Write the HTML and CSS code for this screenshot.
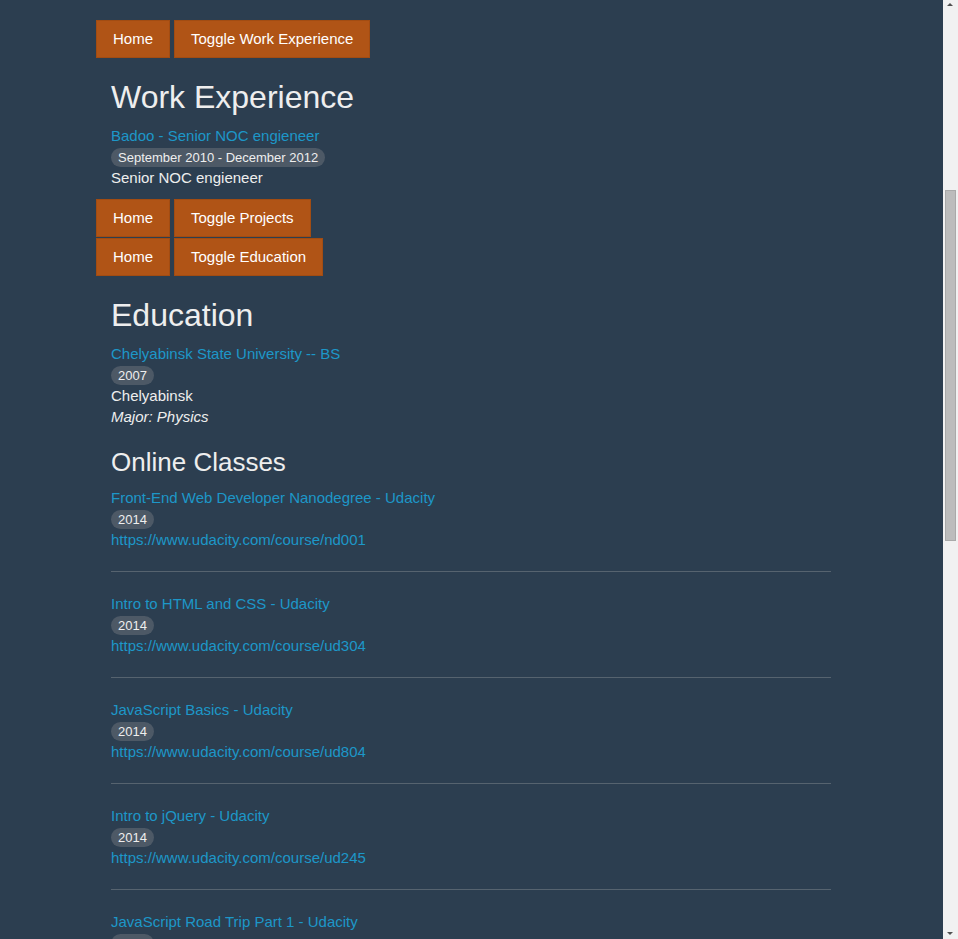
FILE: index.html
```html
<!DOCTYPE html>
<html lang="en">
<head>
<meta charset="utf-8">
<title>Resume</title>
<link rel="stylesheet" href="styles.css">
</head>
<body>
<div class="container">
  <nav class="nav">
    <a class="btn" href="#">Home</a>
    <a class="btn" href="#">Toggle Work Experience</a>
  </nav>
  <section class="section work">
    <h2 class="heading">Work Experience</h2>
    <div class="entry">
      <a class="link" href="#">Badoo - Senior NOC engieneer</a>
      <div class="line"><span class="badge">September 2010 - December 2012</span></div>
      <div class="line">Senior NOC engieneer</div>
    </div>
  </section>
  <nav class="nav">
    <a class="btn" href="#">Home</a>
    <a class="btn" href="#">Toggle Projects</a>
  </nav>
  <nav class="nav">
    <a class="btn" href="#">Home</a>
    <a class="btn" href="#">Toggle Education</a>
  </nav>
  <section class="section">
    <h2 class="heading">Education</h2>
    <div class="entry">
      <a class="link" href="#">Chelyabinsk State University -- BS</a>
      <div class="line"><span class="badge">2007</span></div>
      <div class="line">Chelyabinsk</div>
      <div class="line"><em>Major: Physics</em></div>
    </div>
    <h3 class="subheading">Online Classes</h3>
    <div class="class">
      <a class="link" href="#">Front-End Web Developer Nanodegree - Udacity</a>
      <div class="line"><span class="badge">2014</span></div>
      <a class="link" href="#">https://www.udacity.com/course/nd001</a>
    </div>
    <hr class="rule">
    <div class="class">
      <a class="link" href="#">Intro to HTML and CSS - Udacity</a>
      <div class="line"><span class="badge">2014</span></div>
      <a class="link" href="#">https://www.udacity.com/course/ud304</a>
    </div>
    <hr class="rule">
    <div class="class">
      <a class="link" href="#">JavaScript Basics - Udacity</a>
      <div class="line"><span class="badge">2014</span></div>
      <a class="link" href="#">https://www.udacity.com/course/ud804</a>
    </div>
    <hr class="rule">
    <div class="class">
      <a class="link" href="#">Intro to jQuery - Udacity</a>
      <div class="line"><span class="badge">2014</span></div>
      <a class="link" href="#">https://www.udacity.com/course/ud245</a>
    </div>
    <hr class="rule">
    <div class="class">
      <a class="link" href="#">JavaScript Road Trip Part 1 - Udacity</a>
      <div class="line"><span class="badge">2014</span></div>
      <a class="link" href="#">https://www.codeschool.com/courses/javascript-road-trip-part-1</a>
    </div>
    <hr class="rule">
    <div class="class">
      <a class="link" href="#">JavaScript Road Trip Part 2 - Code School</a>
      <div class="line"><span class="badge">2014</span></div>
      <a class="link" href="#">https://www.codeschool.com/courses/javascript-road-trip-part-2</a>
    </div>
    <hr class="rule">
    <div class="class">
      <a class="link" href="#">Object-Oriented JavaScript - Udacity</a>
      <div class="line"><span class="badge">2014</span></div>
      <a class="link" href="#">https://www.udacity.com/course/ud015</a>
    </div>
  </section>
</div>
<div class="scrollbar" aria-hidden="true">
  <span class="arrow arrow-up"></span>
  <span class="thumb"></span>
  <span class="arrow arrow-down"></span>
</div>
</body>
</html>
```

FILE: styles.css
```css
html, body {
  margin: 0;
  padding: 0;
}

html {
  overflow: hidden;
}

body {
  background: #2c3e50;
  color: #eeeeee;
  font-family: "Liberation Sans", Arial, sans-serif;
  font-size: 15px;
  line-height: 21px;
  padding: 20px 16px 40px 0;
}

.container {
  width: 750px;
  margin: 0 auto;
}

.nav {
  display: flex;
  gap: 4px;
}

.nav + .nav {
  margin-top: 1px;
}

.btn {
  display: block;
  box-sizing: border-box;
  height: 38px;
  line-height: 36px;
  padding: 0 16px;
  background: #b05416;
  border: 1px solid #a24c12;
  color: #ffffff;
  text-decoration: none;
  font-size: 15px;
}

.section {
  padding: 0 15px;
}

.work {
  padding-bottom: 11px;
}

.heading {
  font-size: 32px;
  font-weight: normal;
  line-height: 1.1;
  margin: 22px 0 10px;
  color: #eeeeee;
}

.subheading {
  font-size: 26px;
  font-weight: normal;
  line-height: 1.1;
  margin: 21px 0 10px;
  color: #eeeeee;
}

.link {
  display: block;
  color: #1d97c8;
  text-decoration: none;
}

.line {
  display: block;
  height: 21px;
}

.badge {
  display: inline-block;
  font-size: 13px;
  line-height: 13px;
  padding: 3px 7px;
  margin-top: 2px;
  border-radius: 10px;
  background: #4d5966;
  color: #eeeeee;
  vertical-align: top;
}

.rule {
  border: 0;
  border-top: 1px solid #56636f;
  margin: 21px 0;
  height: 0;
}

.scrollbar {
  position: fixed;
  top: 0;
  right: 0;
  width: 15px;
  height: 100vh;
  background: #f1f1f1;
}

.thumb {
  position: absolute;
  left: 2px;
  top: 190px;
  width: 9px;
  height: 349px;
  background: #bcbcbc;
  border: 1px solid #a9a9a9;
}

.arrow {
  position: absolute;
  left: 4px;
  width: 0;
  height: 0;
  border-left: 3.5px solid transparent;
  border-right: 3.5px solid transparent;
}

.arrow-up {
  top: 3px;
  border-bottom: 3.5px solid #505050;
}

.arrow-down {
  bottom: 4px;
  border-top: 3.5px solid #505050;
}
```
